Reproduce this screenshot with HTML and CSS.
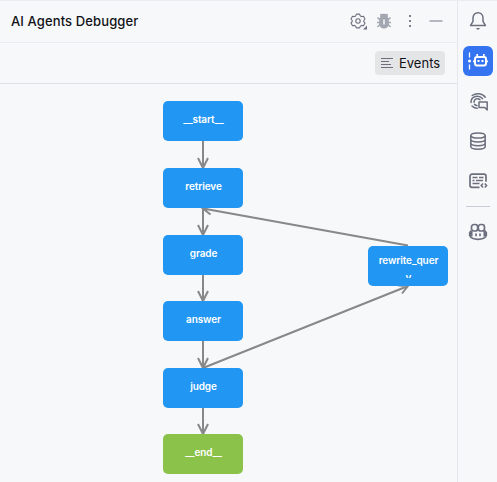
FILE: index.html
```html
<!DOCTYPE html>
<html lang="en">
<head>
<meta charset="utf-8">
<title>AI Agents Debugger</title>
<link rel="stylesheet" href="styles.css">
</head>
<body>
<div class="window">
  <main class="panel">
    <header class="header">
      <h1 class="title">AI Agents Debugger</h1>
      <div class="actions">
        <svg class="icon" viewBox="0 0 18 18" fill="none" stroke="#6c707e" stroke-width="1.1" stroke-linejoin="round">
          <path d="M7.4 2.1h3.2l.7 1.800 1.300.7 1.900-.3 1.500 2.700-1.200 1.500v1.100l1.200 1.500-1.500 2.600-1.900-.3-1.300.8-.7 1.700H7.400l-.7-1.700-1.300-.8-1.900.3L2 11.100l1.200-1.500V8.500L2 7l1.500-2.700 1.900.3 1.300-.7z"/>
          <circle cx="9" cy="9" r="2.200"/><path d="M18 13.500V17.500h-4z" fill="#6c707e" stroke="none"/>
        </svg>
        <svg class="icon" viewBox="0 0 18 18" fill="none" stroke="#a2a6b0" stroke-width="1.500">
          <path d="M5 6a4 4.200 0 0 1 8 0zM4.200 6h9.600v6a4.800 4.500 0 0 1-9.600 0z" fill="#a2a6b0" stroke="none"/>
          <path d="M6.500 3.500 5.500 2M11.500 3.500 12.500 2M5 8 2.500 5.500M13 8l2.500-2.500M5 10.500H2M13 10.500h3M5 12.500l-2.500 2.500M13 12.500l2.500 2.500"/>
          <path d="M9 7.500v5" stroke="#f7f8fa"/>
        </svg>
        <svg class="icon" viewBox="0 0 18 18" fill="#7d818d"><path d="M8 3h2v2H8zM8 8h2v2H8zM8 13h2v2H8z"/></svg>
        <svg class="icon" viewBox="0 0 18 18"><path d="M2.500 9h13" stroke="#b5b8c0" stroke-width="2"/></svg>
      </div>
    </header>
    <div class="toolbar">
      <button class="events">
        <svg class="lines" viewBox="0 0 12 12" stroke="#6c707e"><path d="M0 1.500h12M0 4.500h8M0 7.500h10M0 10.500h12"/></svg>
        <span>Events</span>
      </button>
    </div>
    <section class="canvas">
      <svg class="edges" viewBox="0 0 457 398" fill="none" stroke="#888" stroke-width="2">
        <path d="M203 57v26M198 74l5 10 5-10M203 124v26M198 141l5 10 5-10M203 191v25M198 207l5 10 5-10M203 257v26M198 274l5 10 5-10M203 324v25M198 340l5 10 5-10"/>
        <path d="M408 161.500 203 124.500M210.500 130.500l-7.500-6 9-3M203 284l205-82M398.500 201.500l9.500.5-6 7.500"/>
      </svg>
      <div class="node start">__start__</div>
      <div class="node retrieve">retrieve</div>
      <div class="node grade">grade</div>
      <div class="node answer">answer</div>
      <div class="node judge">judge</div>
      <div class="node end">__end__</div>
      <div class="node rewrite"><span class="clip">rewrite_quer<br>y</span></div>
    </section>
  </main>
  <aside class="rail">
    <div class="tool">
      <svg class="rail-icon" viewBox="0 0 20 20" fill="none" stroke="#6c707e" stroke-width="1.500" stroke-linejoin="round">
        <path d="M10 1.700C6.900 1.700 5 4 5 7v3.300L2.500 14.600h15L15 10.300V7c0-3-1.900-5.300-5-5.300z"/><path d="M7.800 17h4.400L10 19z" fill="#6c707e" stroke="none"/>
      </svg>
    </div>
    <div class="tool active">
      <svg class="rail-icon agent" viewBox="0 0 22 20" fill="none" stroke="#fff" stroke-width="2">
        <path d="M2.500 1.500v5M2.500 13.500v5" stroke-width="1.300"/><circle cx="2.500" cy="10" r="1.500" fill="#fff" stroke="none"/>
        <rect x="8" y="6" width="11" height="8.500" rx="2"/><path d="M10.200 3v3M16.800 3v3M6 10.300h2M19 10.300h2" stroke-width="1.700"/><path d="M10.500 9h2v2h-2zM14.500 9h2v2h-2z" fill="#fff" stroke="none"/>
      </svg>
    </div>
    <div class="tool">
      <svg class="rail-icon lowered" viewBox="0 0 20 20" fill="none" stroke="#6c707e" stroke-width="1.500" stroke-linecap="round">
        <path d="M3.200 3.500C7 .8 13.300 1.100 16.300 5.200M2 10.500C2 3.800 10 2.600 13.500 6.600M3 14C5 16 6.500 16.300 8.300 16.300M5 10.300c0-3.600 3.900-4.600 6-2.600M5.500 12.300c.7 1 1.600 1.300 2.500 1.300"/>
        <path d="M10 10h8.200v8l-2.500-2.500H10z" stroke-linejoin="round"/>
      </svg>
    </div>
    <div class="tool">
      <svg class="rail-icon" viewBox="0 0 20 20" fill="none" stroke="#6c707e" stroke-width="1.500">
        <ellipse cx="10" cy="4.500" rx="7.200" ry="2.600"/><path d="M2.800 4.500v11c0 3.500 14.400 3.500 14.400 0v-11M2.800 8.300c0 3.500 14.400 3.500 14.400 0M2.800 12c0 3.500 14.400 3.500 14.400 0"/>
      </svg>
    </div>
    <div class="tool">
      <svg class="rail-icon" viewBox="0 0 20 20" fill="none" stroke="#6c707e" stroke-width="1.700">
        <path d="M11.500 16.300H4a2 2 0 0 1-2-2V5.200a2 2 0 0 1 2-2h12a2 2 0 0 1 2 2v5.500"/><path d="M4.500 6.500h5M11 6.500h4.500M4.500 9.500h2M8 9.500h7M4.500 12.500h7M15 12.500l-1.800 2 1.800 2M16.800 12.500l1.800 2-1.800 2" stroke-width="1.500"/>
      </svg>
    </div>
    <hr class="divider">
    <div class="tool">
      <svg class="rail-icon" viewBox="0 0 20 20" fill="none" stroke="#6c707e" stroke-width="1.700">
        <rect x="3.500" y="2.500" width="6.200" height="6.500" rx="2.500"/><rect x="10.300" y="2.500" width="6.200" height="6.500" rx="2.500"/>
        <path d="M3.300 8.500 1.700 10.800v2.700C4 18.600 16 18.600 18.300 13.500v-2.700l-1.600-2.300M8 11.500v2.800M12 11.500v2.800"/>
        <path d="M3.300 9v5.500M16.700 9v5.500" stroke-width="2.500"/>
      </svg>
    </div>
  </aside>
</div>
</body>
</html>
```
FILE: styles.css
```css
* { box-sizing: border-box; }
body {
  margin: 0;
  background: #f7f8fa;
  color: #111216;
  font-family: Inter, "Liberation Sans", sans-serif;
  font-size: 13px;
  overflow: hidden;
}
.window {
  display: flex;
  width: 497px;
  height: 482px;
  border-top: 1px solid #ebecf0;
}
.panel { width: 457px; display: flex; flex-direction: column; }
.header {
  height: 42px;
  border-bottom: 1px solid #ebecf0;
  display: flex;
  align-items: center;
  justify-content: space-between;
  padding: 0 12px 1px 11px;
}
.title { margin: 0; font-size: 13px; font-weight: 500; line-height: 20px; letter-spacing: 0.12px; }
.actions { display: flex; gap: 8px; }
.icon { width: 18px; height: 18px; display: block; }
.toolbar {
  height: 41px;
  border-bottom: 1px solid #dfe1e5;
  display: flex;
  justify-content: flex-end;
  align-items: center;
  padding-right: 12px;
}
.events {
  width: 70px;
  height: 24px;
  border: 0;
  border-radius: 4px;
  background: #e4e5e7;
  color: inherit;
  display: flex;
  align-items: center;
  gap: 6px;
  padding: 0 0 0 6px;
  font: 13px Inter, sans-serif;
}
.lines { width: 12px; height: 12px; }
.canvas { position: relative; flex: 1; overflow: hidden; }
.edges { position: absolute; left: 0; top: 0; width: 457px; height: 398px; }
.node {
  position: absolute;
  left: 163px;
  width: 80px;
  height: 40px;
  border-radius: 5px;
  background: #2196f3;
  color: #fff;
  font-size: 10px;
  font-weight: 600;
  letter-spacing: -0.1px;
  line-height: 15px;
  text-align: center;
  padding: 11px 0 0 1px;
}
.start { top: 17px; }
.retrieve { top: 84px; }
.grade { top: 151px; }
.answer { top: 217px; }
.judge { top: 284px; }
.end { top: 350px; background: #8bc34a; }
.rewrite { left: 368px; top: 162px; padding-top: 6px; line-height: 17px; }
.clip { display: block; height: 26px; overflow: hidden; }
.rail {
  width: 40px;
  border-left: 1px solid #e6e7eb;
  display: flex;
  flex-direction: column;
  align-items: center;
  gap: 10px;
  padding: 5px 0 0 1px;
}
.tool {
  width: 30px;
  height: 30px;
  flex: none;
  border-radius: 6px;
  display: flex;
  align-items: center;
  justify-content: center;
}
.active { background: #3574f0; }
.rail-icon { width: 20px; height: 20px; }
.lowered { margin: 2px 0 0 1px; }
.agent { width: 22px; }
.divider { width: 24px; height: 1px; border: 0; margin: 0; background: #c9ccd6; }
```
